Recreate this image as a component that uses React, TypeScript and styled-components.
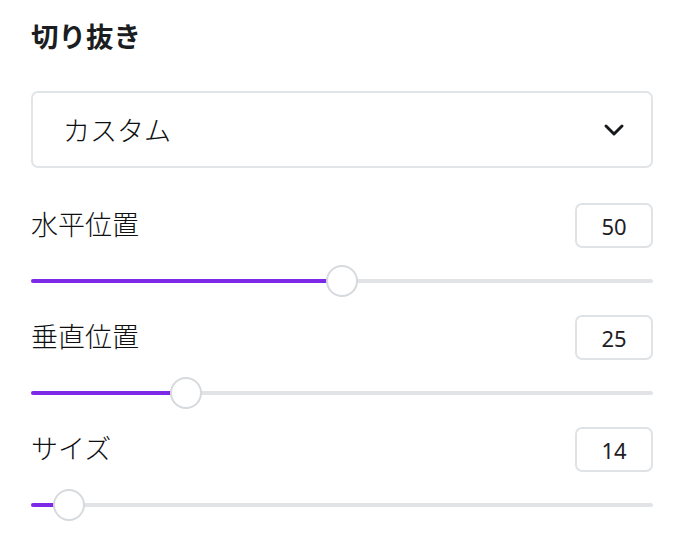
import React from 'react';
import styled, { createGlobalStyle } from 'styled-components';

const GlobalStyle = createGlobalStyle`
    body {
        margin: 0;
        background: #ffffff;
        font-family: "Noto Sans", "Noto Sans CJK JP", sans-serif;
        color: #17191c;
    }
`;

const Panel = styled.div`
    width: 688px;
    box-sizing: border-box;
    padding: 17px 35px 0 31px;
    display: flex;
    flex-direction: column;
`;

const Title = styled.h2`
    margin: 0;
    font-size: 27.5px;
    line-height: 37px;
    font-weight: 700;
    font-family: "Noto Sans CJK JP", sans-serif;
    color: #1b1d21;
`;

const Select = styled.div`
    margin-top: 37px;
    height: 77px;
    box-sizing: border-box;
    border: 2px solid #e2e5e8;
    border-radius: 7px;
    display: flex;
    align-items: center;
    justify-content: space-between;
    padding: 0 26px 0 30px;
`;

const SelectText = styled.span`
    font-size: 27px;
    font-weight: 300;
    font-family: "Noto Sans CJK JP", sans-serif;
    color: #0e0f11;
`;

const Field = styled.div`
    margin-top: 35px;
    display: flex;
    flex-direction: column;
    & + & {
        margin-top: 18px;
    }
`;

const FieldHead = styled.div`
    display: flex;
    align-items: center;
    justify-content: space-between;
`;

const Label = styled.span`
    font-size: 27px;
    font-weight: 300;
    line-height: 40px;
    margin-top: -3px;
    font-family: "Noto Sans CJK JP", sans-serif;
    color: #0e0f11;
`;

const NumberBox = styled.div`
    width: 78px;
    height: 45px;
    box-sizing: border-box;
    border: 2px solid #e0e3e6;
    border-radius: 7px;
    display: flex;
    align-items: center;
    justify-content: center;
    font-size: 22px;
    color: #1e2024;
`;

const Slider = styled.div`
    position: relative;
    margin-top: 17px;
    height: 32px;
`;

const Track = styled.div`
    position: absolute;
    left: 0;
    right: 0;
    top: 14px;
    height: 4px;
    border-radius: 2px;
    background: #e1e3e6;
`;

const Fill = styled.div`
    position: absolute;
    left: 0;
    top: 14px;
    height: 4px;
    border-radius: 2px;
    background: #7d2ae8;
`;

const Thumb = styled.div`
    position: absolute;
    top: 0;
    width: 32px;
    height: 32px;
    margin-left: -16px;
    box-sizing: border-box;
    border-radius: 50%;
    background: #ffffff;
    border: 2px solid #d6d9dd;
`;

const Chevron = () => (
  <svg width="22" height="14" viewBox="0 0 22 14">
    <path d="M3 3 L11 11 L19 3" fill="none" stroke="#17191c" strokeWidth="3" strokeLinecap="round" strokeLinejoin="round" />
  </svg>
);

interface IField {
  label: string;
  value: number;
  pos: number;
}

const fields: IField[] = [
  { label: '水平位置', value: 50, pos: 311 },
  { label: '垂直位置', value: 25, pos: 155 },
  { label: 'サイズ', value: 14, pos: 38 },
];

const SliderField: React.FC<IField> = (props) => {
  return (
    <Field>
        <FieldHead>
            <Label>{props.label}</Label>
            <NumberBox>{props.value}</NumberBox>
        </FieldHead>
        <Slider>
            <Track />
            <Fill style={{ width: props.pos }} />
            <Thumb style={{ left: props.pos }} />
        </Slider>
    </Field>
  );
};

const App: React.FC = () => {
  return (
    <>
        <GlobalStyle />
        <Panel>
            <Title>切り抜き</Title>
            <Select>
                <SelectText>カスタム</SelectText>
                <Chevron />
            </Select>
            {fields.map(f => <SliderField key={f.label} {...f} />)}
        </Panel>
    </>
  );
};

export default App;
